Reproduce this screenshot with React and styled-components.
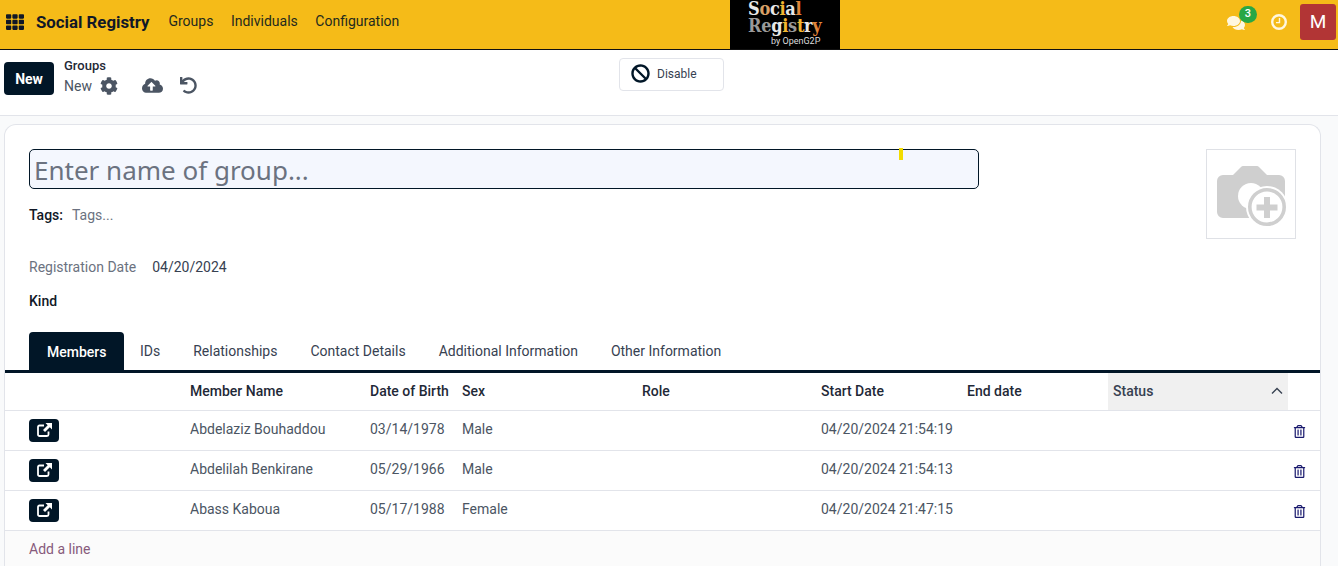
import React from "react";
import styled, { createGlobalStyle } from "styled-components";
import {
  FaTh,
  FaCog,
  FaCloudUploadAlt,
  FaUndo,
  FaBan,
  FaComments,
  FaRegTrashAlt,
} from "react-icons/fa";

const GlobalStyle = createGlobalStyle`
  html, body {
    margin: 0;
    height: 100%;
    overflow: hidden;
    background: #f9fafb;
    font-family: Roboto, "Liberation Sans", sans-serif;
    font-size: 14px;
    color: #374151;
  }
  * { box-sizing: border-box; }
`;

const Navbar = styled.header`
  height: 50px;
  background: #f5bb18;
  border-bottom: 1px solid #111;
  display: grid;
  grid-template-columns: 730px 110px 1fr;
`;
const NavLeft = styled.div`
  display: flex;
  align-items: center;
  padding: 0 0 5px 6px;
`;
const AppsButton = styled.span`
  display: flex;
  color: #111827;
  font-size: 18px;
  margin-right: 12px;
`;
const Brand = styled.span`
  font-size: 16.8px;
  font-weight: 700;
  color: #111827;
  margin-right: 19px;
`;
const NavLink = styled.a`
  font-size: 14px;
  color: #1f2a1e;
  margin-right: 17.5px;
  position: relative;
  top: -1.5px;
`;
const Logo = styled.div`
  background: #000;
  height: 49px;
  display: flex;
  flex-direction: column;
  font-family: "DejaVu Serif Condensed", "DejaVu Serif", serif;
  font-weight: 700;
  font-size: 18px;
  line-height: 17px;
  color: #e8e8e8;
  letter-spacing: -0.3px;
  padding-left: 18px;
`;
const LogoLine = styled.span`
  white-space: nowrap;
`;
const LogoBy = styled.span`
  font-family: Roboto, sans-serif;
  font-weight: 400;
  font-size: 9px;
  line-height: 9px;
  letter-spacing: 0;
  margin: 3px 0 0 23px;
  color: #ddd;
`;
const Tint = styled.span`
  color: ${(p) => p.$c};
`;
const NavRight = styled.div`
  display: flex;
  align-items: center;
  justify-content: flex-end;
  padding: 0 2px 6px 0;
  color: #fff7de;
`;
const MessageIcon = styled.span`
  position: relative;
  display: flex;
  font-size: 18px;
  margin-right: 26px;
  top: 1px;
`;
const CountBadge = styled.span`
  position: absolute;
  left: 12px;
  top: -8px;
  width: 18px;
  height: 17px;
  border-radius: 9px;
  background: #28a745;
  color: #fff;
  font-size: 11px;
  font-weight: 500;
  line-height: 16px;
  text-align: center;
`;
const ClockIcon = styled.span`
  display: flex;
  margin-right: 13px;
`;
const Avatar = styled.span`
  width: 36px;
  height: 36px;
  border-radius: 3px;
  background: #b23535;
  color: #fff;
  font-size: 19px;
  display: flex;
  align-items: center;
  justify-content: center;
`;

const ControlPanel = styled.div`
  height: 66px;
  background: #fff;
  border-bottom: 1px solid #e2e4ea;
  display: flex;
  padding: 12px 4px 0;
  position: relative;
`;
const NewButton = styled.button`
  width: 50px;
  height: 33px;
  border: 0;
  border-radius: 4px;
  background: #011627;
  color: #fff;
  font: 700 14px Roboto, sans-serif;
  padding: 0;
`;
const Breadcrumb = styled.div`
  margin-left: 10px;
  margin-top: -4px;
  display: flex;
  flex-direction: column;
`;
const CrumbParent = styled.span`
  font-size: 13px;
  font-weight: 500;
  line-height: 16px;
  color: #1f2937;
`;
const CrumbRow = styled.div`
  display: flex;
  align-items: center;
  color: #4b5563;
  margin-top: 1px;
  font-size: 14px;
`;
const CrumbIcon = styled.span`
  display: flex;
  font-size: ${(p) => p.$size}px;
  margin-left: ${(p) => p.$gap}px;
  color: #4b5563;
`;
const ActionSlot = styled.div`
  position: absolute;
  left: 619px;
  top: 8px;
`;
const DisableButton = styled.button`
  width: 105px;
  height: 33px;
  background: #fff;
  border: 1px solid #e2e4ea;
  border-radius: 4px;
  display: flex;
  align-items: center;
  padding: 0 0 2px 11px;
  font: 400 12px Roboto, sans-serif;
  color: #374151;
  gap: 7px;
  svg {
    font-size: 19px;
    color: #011627;
  }
`;

const Card = styled.main`
  margin: 8px 17px 0 4px;
  height: 442px;
  overflow: hidden;
  background: #fff;
  border: 1px solid #e2e4ea;
  border-bottom: 0;
  border-radius: 12px 12px 0 0;
  padding-top: 24px;
`;
const Head = styled.div`
  display: flex;
  justify-content: space-between;
  padding: 0 24px;
`;
const HeadMain = styled.div`
  width: 950px;
  position: relative;
`;
const NameInput = styled.div`
  height: 40px;
  background: #f4f7fe;
  border: 1px solid #011627;
  border-radius: 5px;
  padding-left: 4px;
  font-family: "Noto Sans", "Open Sans", sans-serif;
  font-size: 26px;
  line-height: 41px;
  color: #6b7280;
`;
const CursorMark = styled.span`
  position: absolute;
  left: 870px;
  top: -1px;
  width: 4px;
  height: 12px;
  background: #f2dc00;
`;
const TagsRow = styled.div`
  display: flex;
  gap: 9px;
  margin-top: 18px;
  line-height: 16px;
`;
const StrongLabel = styled.span`
  font-weight: 500;
  color: #111827;
`;
const Muted = styled.span`
  color: #6b7280;
`;
const PhotoBox = styled.div`
  width: 90px;
  height: 90px;
  border: 1px solid #dfe1e6;
  padding: 16px 0 0 10px;
  background: #fff;
`;
const RegRow = styled.div`
  display: flex;
  gap: 16px;
  line-height: 16px;
  margin-top: 36px;
  color: #374151;
`;
const KindRow = styled.div`
  line-height: 16px;
  margin-top: 18px;
`;

const Tabs = styled.nav`
  margin-top: 23px;
  padding-left: 24px;
  height: 41px;
  border-bottom: 3px solid #011627;
  display: flex;
`;
const Tab = styled.a`
  height: 38px;
  padding: 0 ${(p) => (p.$active ? "18px" : "16.5px")};
  margin-right: ${(p) => (p.$active ? "-1px" : "0")};
  display: flex;
  align-items: center;
  border-radius: 4px 4px 0 0;
  background: ${(p) => (p.$active ? "#011627" : "transparent")};
  color: ${(p) => (p.$active ? "#fff" : "#374151")};
  font-weight: ${(p) => (p.$active ? 500 : 400)};
  font-size: 14px;
  span {
    position: relative;
    top: ${(p) => (p.$active ? "1px" : "0")};
  }
`;

const Row = styled.div`
  display: grid;
  grid-template-columns: 180px 180px 92px 180px 179px 146px 146px 180px 32px;
  align-items: center;
  height: ${(p) => (p.$head ? "38px" : "40px")};
  border-bottom: 1px solid #e2e4ea;
  background: #fff;
`;
const Cell = styled.div`
  padding-left: 5px;
  white-space: nowrap;
  color: #4b5563;
  position: relative;
  top: -2px;
`;
const HeadCell = styled.div`
  padding-left: 5px;
  font-weight: 500;
  color: #1f2937;
  white-space: nowrap;
  position: relative;
  top: -1px;
`;
const StatusCell = styled(HeadCell)`
  height: 37px;
  top: 0;
  background: #f0f0f0;
  display: flex;
  align-items: center;
  justify-content: space-between;
  padding-right: 5px;
  padding-bottom: 2px;
  color: #374151;
`;
const OpenButton = styled.button`
  margin-left: 24px;
  width: 30px;
  height: 23px;
  border: 0;
  border-radius: 4px;
  background: #011627;
  color: #fff;
  padding: 0 0 2px;
  display: flex;
  align-items: center;
  justify-content: center;
`;
const TrashCell = styled.div`
  display: flex;
  padding: 2px 0 0 4.5px;
  color: #1a1a6e;
  font-size: 13px;
`;
const AddRow = styled.div`
  height: 35px;
  padding: 10px 24px 0;
  color: #875a7b;
  line-height: 16px;
  background: #fbfbfb;
`;

const members = [
  ["Abdelaziz Bouhaddou", "03/14/1978", "Male", "04/20/2024 21:54:19"],
  ["Abdelilah Benkirane", "05/29/1966", "Male", "04/20/2024 21:54:13"],
  ["Abass Kaboua", "05/17/1988", "Female", "04/20/2024 21:47:15"],
];

const tabs = ["Members", "IDs", "Relationships", "Contact Details", "Additional Information", "Other Information"];

const CameraPlus = () => (
  <svg width="70" height="62" viewBox="0 0 70 62" fill="#cfcfcf">
    <path d="M16 9 24 1q1-1 2-1h14q1 0 2 1l8 8h12a6 6 0 0 1 6 6v31a6 6 0 0 1-6 6H6a6 6 0 0 1-6-6V15a6 6 0 0 1 6-6z" />
    <circle cx="34" cy="30" r="13" fill="#fff" />
    <circle cx="50" cy="41" r="21" fill="#fff" />
    <circle cx="50" cy="41" r="17.2" fill="none" stroke="#cfcfcf" strokeWidth="3.6" />
    <path d="M47 31h6v7.5h7.5v6H53V52h-6v-7.5h-7.5v-6H47z" />
  </svg>
);

const Chevron = () => (
  <svg width="12" height="8" viewBox="0 0 12 8" fill="none" stroke="#374151" strokeWidth="1.4">
    <path d="M1 6.5 6 1.5l5 5" />
  </svg>
);

const Clock = () => (
  <svg width="16" height="16" viewBox="0 0 16 16" fill="none" stroke="currentColor">
    <circle cx="8" cy="8" r="6.8" strokeWidth="2.4" />
    <path d="M8.5 4v4.6H5" strokeWidth="1.4" />
  </svg>
);

const OpenLink = () => (
  <svg width="15" height="14" viewBox="0 0 15 14">
    <path
      d="M11.5 8.5v3a1.5 1.5 0 0 1-1.5 1.5H2.5A1.5 1.5 0 0 1 1 11.5V4a1.5 1.5 0 0 1 1.5-1.5H7"
      fill="none"
      stroke="currentColor"
      strokeWidth="1.8"
    />
    <path d="M8.5 0H15v6.5l-2.2-2.2L8 9 6 7l4.7-4.8z" fill="currentColor" />
  </svg>
);

export default function App() {
  return (
    <>
      <GlobalStyle />
      <Navbar>
        <NavLeft>
          <AppsButton>
            <FaTh />
          </AppsButton>
          <Brand>Social Registry</Brand>
          <NavLink>Groups</NavLink>
          <NavLink>Individuals</NavLink>
          <NavLink>Configuration</NavLink>
        </NavLeft>
        <Logo>
          <LogoLine>
            S<Tint $c="#d9a066">o</Tint>c<Tint $c="#f2b632">i</Tint>a<Tint $c="#e0853a">l</Tint>
          </LogoLine>
          <LogoLine>
            <Tint $c="#9a9a9a">Re</Tint>
            g
            <Tint $c="#f2b632">i</Tint>
            <Tint $c="#9a9a9a">s</Tint>
            <Tint $c="#f2b632">t</Tint>
            r
            <Tint $c="#e0853a">y</Tint>
          </LogoLine>
          <LogoBy>by OpenG2P</LogoBy>
        </Logo>
        <NavRight>
          <MessageIcon>
            <FaComments />
            <CountBadge>3</CountBadge>
          </MessageIcon>
          <ClockIcon>
            <Clock />
          </ClockIcon>
          <Avatar>M</Avatar>
        </NavRight>
      </Navbar>

      <ControlPanel>
        <NewButton>New</NewButton>
        <Breadcrumb>
          <CrumbParent>Groups</CrumbParent>
          <CrumbRow>
            New
            <CrumbIcon $size={18} $gap={8}>
              <FaCog />
            </CrumbIcon>
            <CrumbIcon $size={21} $gap={24}>
              <FaCloudUploadAlt />
            </CrumbIcon>
            <CrumbIcon $size={17} $gap={17}>
              <FaUndo />
            </CrumbIcon>
          </CrumbRow>
        </Breadcrumb>
        <ActionSlot>
          <DisableButton>
            <FaBan />
            Disable
          </DisableButton>
        </ActionSlot>
      </ControlPanel>

      <Card>
        <Head>
          <HeadMain>
            <NameInput>Enter name of group...</NameInput>
            <CursorMark />
            <TagsRow>
              <StrongLabel>Tags:</StrongLabel>
              <Muted>Tags...</Muted>
            </TagsRow>
            <RegRow>
              <Muted>Registration Date</Muted>
              <span>04/20/2024</span>
            </RegRow>
            <KindRow>
              <StrongLabel>Kind</StrongLabel>
            </KindRow>
          </HeadMain>
          <PhotoBox>
            <CameraPlus />
          </PhotoBox>
        </Head>

        <Tabs>
          {tabs.map((t, i) => (
            <Tab key={t} $active={i === 0}>
              <span>{t}</span>
            </Tab>
          ))}
        </Tabs>

        <Row $head>
          <HeadCell />
          <HeadCell>Member Name</HeadCell>
          <HeadCell>Date of Birth</HeadCell>
          <HeadCell>Sex</HeadCell>
          <HeadCell>Role</HeadCell>
          <HeadCell>Start Date</HeadCell>
          <HeadCell>End date</HeadCell>
          <StatusCell>
            Status
            <Chevron />
          </StatusCell>
          <HeadCell />
        </Row>
        {members.map((m) => (
          <Row key={m[0]}>
            <OpenButton>
              <OpenLink />
            </OpenButton>
            <Cell>{m[0]}</Cell>
            <Cell>{m[1]}</Cell>
            <Cell>{m[2]}</Cell>
            <Cell />
            <Cell>{m[3]}</Cell>
            <Cell />
            <Cell />
            <TrashCell>
              <FaRegTrashAlt />
            </TrashCell>
          </Row>
        ))}
        <AddRow>Add a line</AddRow>
      </Card>
    </>
  );
}
